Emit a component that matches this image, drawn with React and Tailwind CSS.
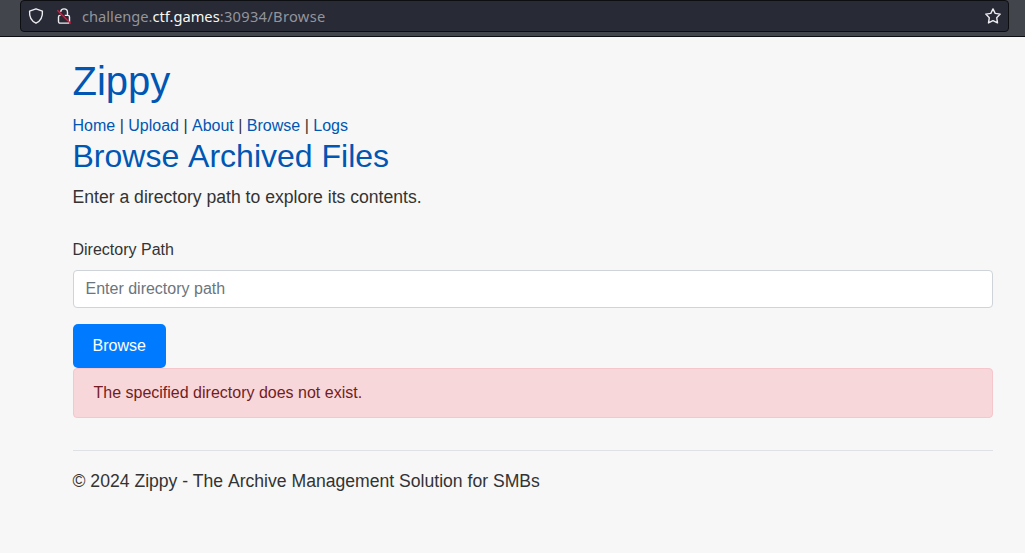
const links = ["Home", "Upload", "About", "Browse", "Logs"];

function ShieldIcon() {
  return (
    <svg className="h-4 w-4" viewBox="0 0 16 16" fill="none" stroke="#ededf0" strokeWidth="1.4" strokeLinejoin="round">
      <path d="M8 .8 14.4 3.1C14.8 8.3 12.6 13 8 15.2 3.4 13 1.2 8.3 1.6 3.1Z" />
    </svg>
  );
}

function InsecureLockIcon() {
  return (
    <svg className="h-4 w-4" viewBox="0 0 16 16" fill="none">
      <path d="M4.6 3.7C5.1 1.8 6.4.9 8 .9c2 0 3.5 1.5 3.5 3.5v2.8M4.600 7.400H4a1.500 1.500 0 0 0-1.500 1.500v4.700A1.500 1.500 0 0 0 4 15.100h8a1.500 1.500 0 0 0 1.500-1.500V8.900A1.500 1.500 0 0 0 12 7.400H8.800" stroke="#ededf0" strokeWidth="1.4" />
      <path d="M1.300 2.300 14.700 15.500" stroke="#e2163f" strokeWidth="1.400" />
    </svg>
  );
}

function StarIcon() {
  return (
    <svg className="h-4 w-4" viewBox="0 0 16 16" fill="none" stroke="#ededf0" strokeWidth="1.4" strokeLinejoin="round">
      <path d="M8 .9 10.200 5.400 15.200 6.100 11.700 9.700 12.500 14.900 8 12.600 3.500 14.900 4.300 9.700.8 6.100 5.800 5.400Z" />
    </svg>
  );
}

export default function App() {
  return (
    <div className="min-h-screen bg-[#f7f7f7] font-['Liberation_Sans',sans-serif] text-base text-[#333]">
      <header className="h-[37px] border-b border-[#0c0e12] bg-[#42454c] pr-4 pl-5">
        <div className="flex h-8 items-center rounded-[4px] border border-[#0c0e12] bg-[#282a36] px-[7px]">
          <ShieldIcon />
          <span className="ml-3">
            <InsecureLockIcon />
          </span>
          <span className="ml-[10px] flex-1 font-['Noto_Sans',sans-serif] text-[14.67px] whitespace-nowrap text-[#94959b]">
            challenge.<span className="text-[#f8f8f2]">ctf.games</span>
            <span className="tracking-[0.3px]">:30934/Browse</span>
          </span>
          <StarIcon />
        </div>
      </header>

      <main className="pt-5 pr-8 pl-[72.5px]">
        <h1 className="mb-[9px] text-[40px] leading-[48px] text-[#0056b3]">Zippy</h1>
        <nav className="-mb-px leading-6">
          {links.map((name, i) => (
            <span key={name}>
              {i > 0 && " | "}
              <a href="#" className="inline-block text-[#0056b3]">{name}</a>
            </span>
          ))}
        </nav>
        <h2 className="mb-[9px] text-[32px] leading-[38.4px] text-[#0056b3]">
          Browse <span className="inline-block">Archived</span> Files
        </h2>
        <p className="mb-[27px] text-[17.6px] leading-[26.4px]">Enter a directory path to explore its contents.</p>

        <form>
          <label htmlFor="path" className="mb-2 block leading-6">Directory Path</label>
          <input
            id="path"
            type="text"
            placeholder="Enter directory path"
            className="mb-4 block h-[38px] w-full rounded border border-[#ced4da] bg-white px-3 py-1.5 placeholder:text-[#6c757d]"
          />
          <button type="button" className="block h-11 rounded-[5px] bg-[#007bff] px-5 text-white">Browse</button>
        </form>

        <div className="rounded border border-[#f5c6cb] bg-[#f8d7da] px-5 py-3 leading-6 text-[#721c24]">
          The specified directory does not exist.
        </div>

        <footer className="mt-8 border-t border-[#dee2e6] pt-[17px]">
          <p className="text-[17.6px] leading-[26.4px]">
            © 2024 Zippy - The <span className="inline-block">Archive</span> Management Solution for SMBs
          </p>
        </footer>
      </main>
    </div>
  );
}
